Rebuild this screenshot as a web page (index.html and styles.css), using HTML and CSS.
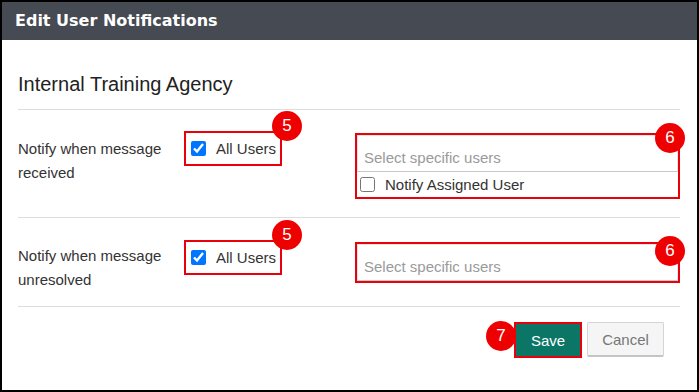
FILE: index.html
```html
<!DOCTYPE html>
<html lang="en">
<head>
<meta charset="utf-8">
<title>Edit User Notifications</title>
<link rel="stylesheet" href="styles.css">
</head>
<body>
<div class="modal">
  <div class="modal-header">
    <h1 class="modal-title">Edit User Notifications</h1>
  </div>
  <div class="modal-body">
    <h2 class="agency">Internal Training Agency</h2>

    <div class="row">
      <div class="row-label">Notify when message received</div>
      <label class="all-users hl">
        <input class="cb" type="checkbox" checked>
        <span>All Users</span>
        <span class="badge badge-all">5</span>
      </label>
      <div class="select-box hl">
        <div class="select-input">Select specific users</div>
        <label class="assigned">
          <input class="cb" type="checkbox">
          <span>Notify Assigned User</span>
        </label>
        <span class="badge badge-select">6</span>
      </div>
    </div>

    <div class="row row--last">
      <div class="row-label">Notify when message unresolved</div>
      <label class="all-users hl">
        <input class="cb" type="checkbox" checked>
        <span>All Users</span>
        <span class="badge badge-all">5</span>
      </label>
      <div class="select-box hl">
        <div class="select-input">Select specific users</div>
        <span class="badge badge-select badge-select--low">6</span>
      </div>
    </div>
  </div>
  <div class="modal-footer">
    <button class="btn btn-save" type="button">Save<span class="badge badge-save">7</span></button>
    <button class="btn btn-cancel" type="button">Cancel</button>
  </div>
</div>
</body>
</html>
```

FILE: styles.css
```css
html, body {
  margin: 0;
  padding: 0;
  background: #fff;
}

.modal {
  box-sizing: border-box;
  width: 699px;
  height: 392px;
  border: 2px solid #000;
  background: #fff;
  font-family: "Liberation Sans", Arial, sans-serif;
  color: #333;
  display: flex;
  flex-direction: column;
}

.modal-header {
  height: 38px;
  background: #464a53;
  padding: 0 13px;
  display: flex;
  align-items: center;
}

.modal-title {
  margin: 0;
  font-family: "DejaVu Sans", Verdana, sans-serif;
  font-size: 16px;
  font-weight: bold;
  line-height: 38px;
  color: #fff;
}

.modal-body {
  padding: 33px 17px 0 16px;
}

.agency {
  margin: 0;
  font-size: 20px;
  font-weight: normal;
  line-height: 22px;
  color: #222;
  padding-bottom: 14px;
  border-bottom: 1px solid #dddddd;
}

.row {
  display: grid;
  grid-template-columns: 166px 171px 1fr;
  align-items: start;
  padding: 23px 0 13px;
  border-bottom: 1px solid #dddddd;
}

.row--last {
  padding: 24px 0 14px;
}

.row-label {
  padding-top: 4px;
  padding-right: 6px;
  font-size: 15px;
  line-height: 24px;
}

.row--last .row-label {
  padding-top: 2px;
}

.hl {
  border: 2px solid #e8000b;
  position: relative;
}

.all-users {
  justify-self: start;
  box-sizing: border-box;
  height: 35px;
  margin-top: -2px;
  padding: 0 4px 0 5px;
  display: flex;
  align-items: center;
  gap: 10px;
  font-size: 15px;
}

.cb {
  width: 15px;
  height: 15px;
  margin: 0;
}

.select-box {
  box-sizing: border-box;
  margin-bottom: 5px;
}

.select-input {
  box-sizing: border-box;
  height: 37px;
  padding: 8px 6px 0;
  display: flex;
  align-items: center;
  border: 1px solid #e6e6e6;
  border-bottom-color: #c8c8c8;
  font-size: 15px;
  color: #9a9a9a;
}

.select-box .select-input + .assigned {
  margin-top: -1px;
}

.assigned {
  height: 26px;
  padding-left: 3px;
  display: flex;
  align-items: center;
  gap: 10px;
  font-size: 15px;
}

.badge {
  position: absolute;
  width: 30px;
  height: 30px;
  border-radius: 50%;
  background: #ee0000;
  color: #fff;
  font-family: "Liberation Sans", Arial, sans-serif;
  font-size: 17px;
  line-height: 30px;
  text-align: center;
}

.badge-all {
  top: -22px;
  right: -22px;
}

.badge-select {
  top: -12px;
  right: -7px;
}

.badge-select--low {
  top: -8px;
}

.modal-footer {
  display: flex;
  justify-content: flex-end;
  gap: 5px;
  padding: 15px 33px 0 0;
}

.btn {
  box-sizing: border-box;
  font-family: "Liberation Sans", Arial, sans-serif;
  font-size: 15px;
  padding: 0;
  cursor: pointer;
}

.btn-save {
  position: relative;
  width: 68px;
  height: 36px;
  border: 2px solid #e8000b;
  background: #0b7566;
  color: #fff;
}

.btn-cancel {
  width: 77px;
  height: 35px;
  border: 1px solid #d4d4d4;
  border-bottom: 2px solid #c4c4c4;
  border-radius: 2px;
  background: #f5f5f5;
  color: #777;
}

.badge-save {
  top: -3px;
  left: -30px;
}
```
